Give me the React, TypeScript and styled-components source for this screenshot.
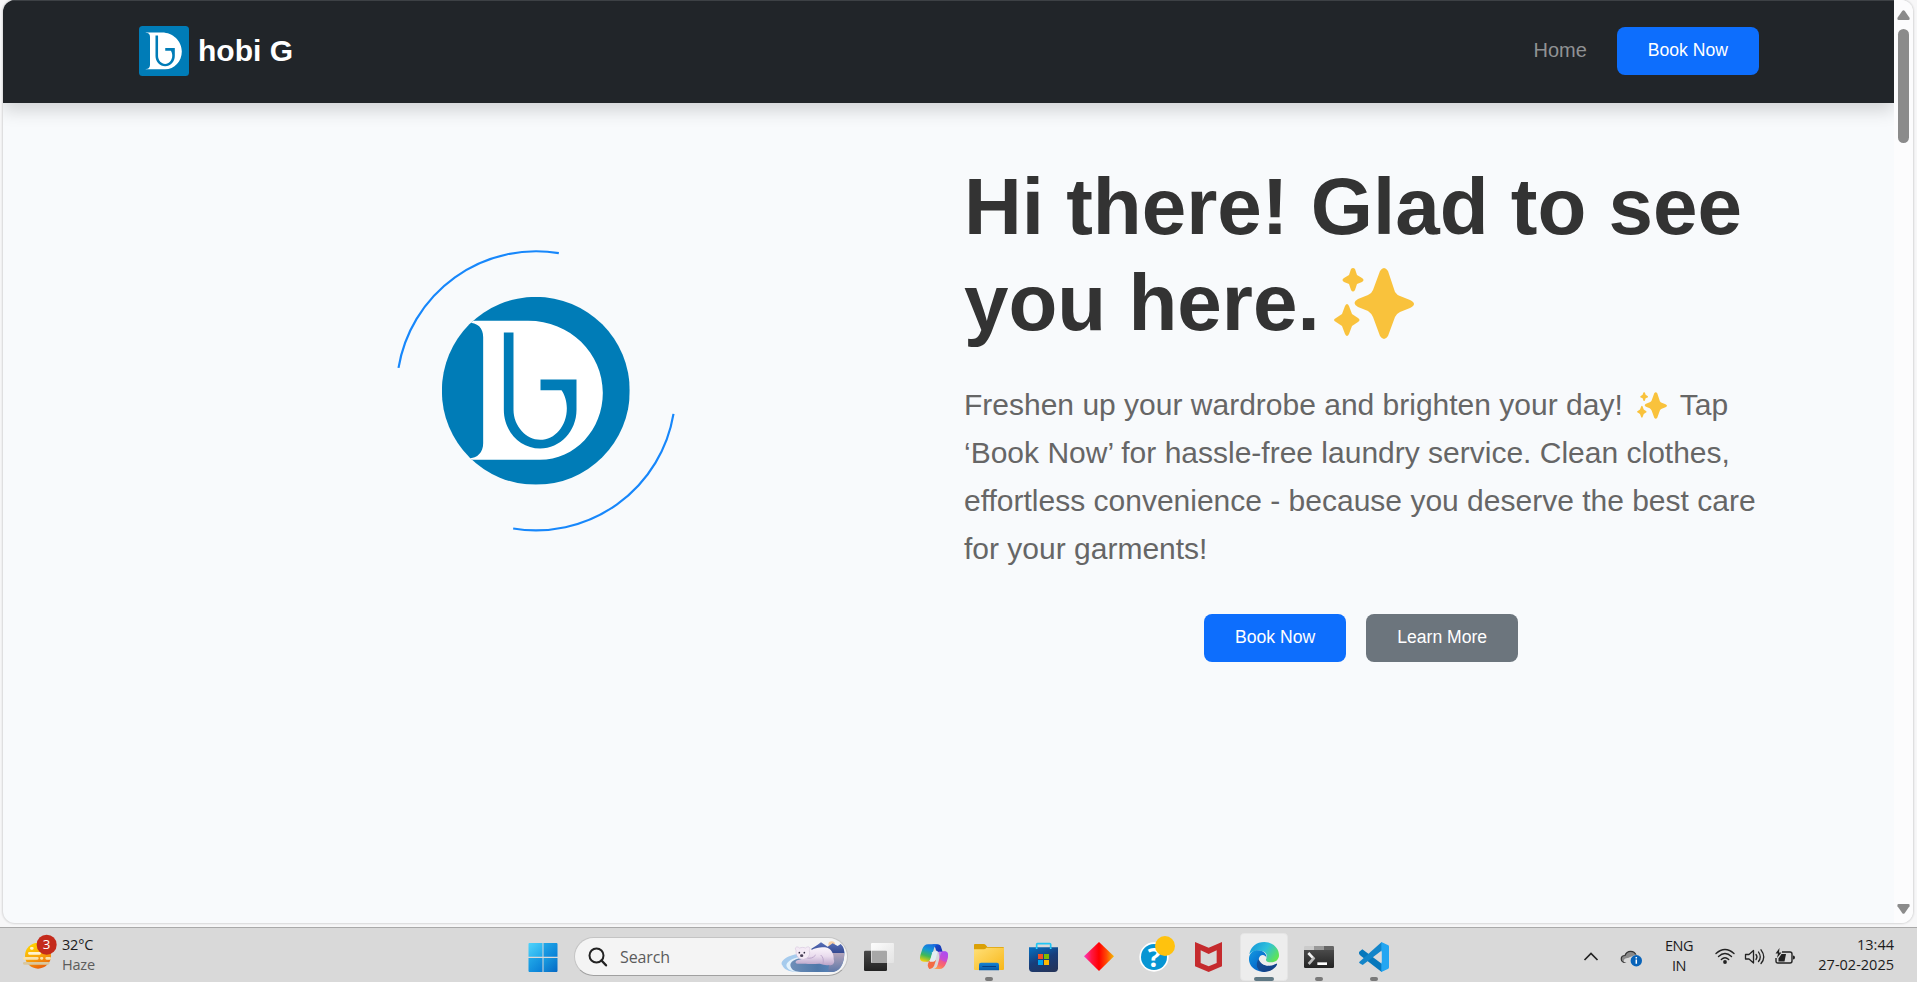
import React from "react";
import styled, { createGlobalStyle } from "styled-components";

const GlobalStyle = createGlobalStyle`
  * { box-sizing: border-box; }
  body { margin: 0; overflow: hidden; font-family: "Liberation Sans", Arial, sans-serif; }
`;

const Desktop = styled.div`
  height: 982px;
  width: 1917px;
  display: flex;
  flex-direction: column;
  overflow: hidden;
  background: #f7f7f8;
`;

const BrowserFrame = styled.div`
  display: flex;
  flex: none;
  width: 1910px;
  height: 923px;
  margin: 0 0 4px 3px;
  border-radius: 12px;
  overflow: hidden;
  background: #f8fafc;
  box-shadow: 0 0 2px 1px rgba(0, 0, 0, 0.13);
`;

const Page = styled.div`
  flex: 1;
  overflow: hidden;
`;

const Navbar = styled.nav`
  height: 103px;
  padding: 0 135px 2px 136px;
  display: flex;
  align-items: center;
  justify-content: space-between;
  background: #212529;
  border-top: 1px solid #3d4145;
  box-shadow: 0 8px 16px rgba(0, 0, 0, 0.15);
`;

const Brand = styled.div`
  display: flex;
  align-items: center;
  gap: 9px;
  color: #fff;
  font-size: 30px;
  font-weight: 700;
  line-height: 50px;
`;

const NavLinks = styled.div`
  display: flex;
  align-items: center;
  gap: 30px;
  padding-bottom: 1px;
`;

const NavLink = styled.span`
  color: #909294;
  font-size: 20px;
`;

const Button = styled.button<{ $tone?: "primary" | "secondary" }>`
  height: 48px;
  padding: 0 31px 1px;
  border: 0;
  border-radius: 8px;
  color: #fff;
  font-family: inherit;
  font-size: 17.6px;
  white-space: nowrap;
  background: ${(p) => (p.$tone === "secondary" ? "#6c757d" : "#0d6efd")};
`;

const Hero = styled.section`
  display: flex;
  padding: 56px 130px 0 136px;
`;

const EmblemColumn = styled.div`
  width: 794px;
  display: flex;
  justify-content: center;
  padding-top: 91px;
`;

const CopyColumn = styled.div`
  width: 796px;
  padding-left: 31px;
  flex: 1;
`;

const Title = styled.h1`
  margin: 0 0 30px;
  color: #333;
  font-size: 80px;
  line-height: 96px;
  font-weight: 700;
  white-space: nowrap;
`;

const Lead = styled.p`
  margin: 0 0 41px;
  color: #666;
  font-size: 30px;
  line-height: 48px;
  white-space: nowrap;
`;

const Actions = styled.div`
  display: flex;
  gap: 20px;
  padding-left: 240px;
`;

const SparkleSvg = styled.svg<{ $size: "large" | "small" }>`
  width: ${(p) => (p.$size === "large" ? 80 : 30)}px;
  height: ${(p) => (p.$size === "large" ? 71 : 27)}px;
  margin: ${(p) => (p.$size === "large" ? "0 0 0 14px" : "0 5px 0 6px")};
  vertical-align: ${(p) => (p.$size === "large" ? -9 : -4)}px;
`;

const Scrollbar = styled.div`
  width: 19px;
  padding: 10px 3px 9px;
  display: flex;
  flex-direction: column;
  background: #fcfcfd;
`;

const Thumb = styled.div`
  width: 11px;
  height: 114px;
  margin: 9px auto auto 1px;
  border-radius: 6px;
  background: #8b8b8b;
`;

const Taskbar = styled.footer`
  height: 55px;
  flex: none;
  display: flex;
  align-items: flex-start;
  padding-top: 5px;
  border-top: 1px solid #a9a9a9;
  background: #d9d9d9;
  color: #1c1c1c;
  font-family: "Open Sans", "Noto Sans", sans-serif;
  font-size: 14.5px;
`;

const Weather = styled.div`
  width: 515px;
  padding-left: 22px;
  display: flex;
  gap: 4px;
`;

const TwoLines = styled.div<{ $align?: string; $spacing?: number }>`
  display: flex;
  flex-direction: column;
  padding-top: 2px;
  line-height: 20px;
  text-align: ${(p) => p.$align ?? "left"};
  letter-spacing: ${(p) => p.$spacing ?? 0}px;
  white-space: nowrap;
`;

const Muted = styled.span`
  color: #5c5c5c;
`;

const Slot = styled.div`
  width: 55px;
  height: 48px;
  display: flex;
  justify-content: center;
`;

const SearchBox = styled.div`
  width: 274px;
  height: 39px;
  margin: 4px 3.5px 0 4px;
  padding: 0 2px 0 13px;
  display: flex;
  align-items: center;
  border-radius: 20px;
  border: 1px solid #c4c4c4;
  border-bottom-color: #a0a0a0;
  background: #f4f4f4;
  color: #5b5b5b;
  font-size: 16px;
`;

const SearchLabel = styled.span`
  margin: 0 auto 0 12px;
  letter-spacing: -0.1px;
`;

const Tray = styled.div`
  margin-left: auto;
  margin-right: 23px;
  display: flex;
`;

const TrayIcon = styled.svg<{ $before: number }>`
  width: 24px;
  height: 24px;
  margin: 12px 0 0 ${(p) => p.$before}px;
  overflow: visible;
`;

const Language = styled.div`
  width: 44px;
  margin: 1px 14px 0 14px;
`;

const Clock = styled.div`
  width: 97px;
  margin-left: auto;
`;

function LogoMark({ size, round }: { size: number; round?: boolean }) {
  return (
    <svg width={size} height={size} viewBox="186 201 564 564">
      <defs>
        <clipPath id={round ? "disc" : "tile"}>
          <rect x="186" y="201" width="564" height="564" rx={round ? 282 : 40} />
        </clipPath>
      </defs>
      <g clipPath={`url(#${round ? "disc" : "tile"})`}>
        <rect x="186" y="201" width="564" height="564" fill="#007cb7" />
        <path
          fill="#fff"
          d="M262 273H445C570 273 669 370 669 489C669 600 586 690 480 690H262V685C292 687 310 668 310 640V322C310 294 294 278 262 278Z"
        />
        <path
          fill="#007cb7"
          d="M372 308H401V540C401 590 440 630 481 630C525 630 561 588 561 535C561 515 555 495 545 481H482V449H590V540C590 605 541 656 481 656C421 656 372 605 372 540Z"
        />
      </g>
    </svg>
  );
}

function Emblem() {
  return (
    <svg width="282" height="282" viewBox="45.5 60.5 846 846">
      <g fill="none" stroke="#1787fb" strokeWidth="6.500">
        <path d="M56 414A418.500 418.500 0 0 1 537 70" />
        <path d="M881 552A418.500 418.500 0 0 1 400 896" />
      </g>
      <svg x="186" y="201" width="564" height="564">
        <LogoMark size={564} round />
      </svg>
    </svg>
  );
}

function Sparkles({ size }: { size: "large" | "small" }) {
  return (
    <SparkleSvg $size={size} viewBox="0 0 80 71">
      <g fill="#f9c23c">
        <path d="M46 3Q50-3 54 3L61 24Q63 27 66 28L76 32Q84 36 76 40L66 44Q62 46 61 49L54 68Q50 74 46 68L39 49Q37 45 34 43L24 39Q17 35 24 31L34 27Q38 25 39 22Z" />
        <path d="M17 1Q19-1 21 1L23 7L28 10Q31 12 28 14L23 16L21 22Q19 25 17 22L15 16L10 14Q7 12 10 10L15 7Z" />
        <path d="M11 38Q13 34 15 38L18 46L24 50Q27 52 24 54L18 58L15 66Q13 70 11 66L8 58L2 54Q-2 52 2 50L8 46Z" />
      </g>
    </SparkleSvg>
  );
}

function TaskIcon({ x, children }: { x: number; children: React.ReactNode }) {
  return (
    <Slot>
      <svg width="48" height="48" viewBox={`${x - 72} 39 144 144`}>
        {children}
      </svg>
    </Slot>
  );
}

function Gradient({ id, stops, d = "0 0 1 1" }: { id: string; stops: string[]; d?: string }) {
  const [x1, y1, x2, y2] = d.split(" ");
  return (
    <linearGradient id={id} x1={x1} y1={y1} x2={x2} y2={y2}>
      {stops.map((s, i) => (
        <stop key={i} offset={i / (stops.length - 1)} stopColor={s} />
      ))}
    </linearGradient>
  );
}

const Bear = () => (
  <svg width="64" height="34" viewBox="844 66 192 102">
    <defs>
      <Gradient id="water" stops={["#6f8fb8", "#4f78a9", "#5d8cc4"]} d="0 0 1 0" />
      <Gradient id="sky" stops={["#5970b9", "#33488f"]} d="0 0 0 1" />
      <Gradient id="shore" stops={["#b5a5bb", "#5f78a8"]} d="0 0 0 1" />
      <Gradient id="fur" stops={["#fbf5fb", "#eadcee", "#b9a3c8"]} d="0 0 0 1" />
    </defs>
    <path d="M896 108C860 112 838 132 848 142C852 153 865 161 890 162H1000C1028 158 1034 130 1034 100Z" fill="#a6cbed" />
    <path d="M897 117C869 124 855 137 862 148C866 156 875 159 890 162H950L960 120Z" fill="#e3f2fc" />
    <path d="M912 118C875 125 867 137 875 150C880 159 892 162 910 162H1000C1025 156 1034 130 1034 103Z" fill="url(#water)" />
    <circle cx="996" cy="80" r="10" fill="#f7cfa5" />
    <path d="M935 92L954 80L964 73L984 86L999 76L1014 84L1023 78C1033 87 1034 98 1034 106H938Z" fill="url(#sky)" />
    <path d="M990 105H1034C1034 135 1022 158 1003 161H986Z" fill="url(#shore)" />
    <path d="M918 106Q948 84 976 88C996 90 1003 109 1002 124C1007 134 999 145 988 141C977 143 970 139 960 137C945 137 933 139 918 137H892C884 135 888 127 896 126L916 121Z" fill="url(#fur)" />
    <path d="M920 119Q936 125 948 111M970 137Q974 120 963 111" fill="none" stroke="#bda7cc" strokeWidth="3" />
    <path d="M889 97C883 88 893 83 899 90Q910 86 918 90C925 82 935 89 929 97Q933 112 922 120Q911 127 900 122Q888 116 889 97Z" fill="#f4eaf5" stroke="#cdbbd6" strokeWidth="1.500" />
    <circle cx="899" cy="104" r="2.500" fill="#302c40" />
    <circle cx="914" cy="104" r="2.500" fill="#302c40" />
    <ellipse cx="906" cy="113" rx="5" ry="4" fill="#4a4058" />
  </svg>
);

export default function App() {
  return (
    <Desktop>
      <GlobalStyle />
      <BrowserFrame>
        <Page>
          <Navbar>
            <Brand>
              <LogoMark size={50} />
              <span>hobi G</span>
            </Brand>
            <NavLinks>
              <NavLink>Home</NavLink>
              <Button>Book Now</Button>
            </NavLinks>
          </Navbar>
          <Hero>
            <EmblemColumn>
              <Emblem />
            </EmblemColumn>
            <CopyColumn>
              <Title>
                Hi there! Glad to see
                <br />
                you here.
                <Sparkles size="large" />
              </Title>
              <Lead>
                Freshen up your wardrobe and brighten your day! <Sparkles size="small" /> Tap
                <br />
                ‘Book Now’ for hassle-free laundry service. Clean clothes,
                <br />
                effortless convenience - because you deserve the best care
                <br />
                for your garments!
              </Lead>
              <Actions>
                <Button>Book Now</Button>
                <Button $tone="secondary">Learn More</Button>
              </Actions>
            </CopyColumn>
          </Hero>
        </Page>
        <Scrollbar>
          <svg width="13" height="10" viewBox="0 0 13 10">
            <path d="M5.200 1Q6.500-.7 7.800 1L12.500 7.800Q13 10 11.500 10H1.500Q0 10 .5 7.800Z" fill="#8b8b8b" />
          </svg>
          <Thumb />
          <svg width="13" height="10" viewBox="0 0 13 10">
            <path d="M5.200 9Q6.500 10.700 7.800 9L12.500 2.200Q13 0 11.500 0H1.500Q0 0 .5 2.200Z" fill="#8b8b8b" />
          </svg>
        </Scrollbar>
      </BrowserFrame>
      <Taskbar>
        <Weather>
          <svg width="36" height="40" viewBox="66 99 108 120">
            <defs>
              <Gradient id="sun" stops={["#ffd400", "#f9a70b", "#e85a0c"]} d="0.3 0 0.7 1" />
            </defs>
            <circle cx="114" cy="167" r="39" fill="url(#sun)" />
            <g strokeLinecap="round" strokeWidth="8" fill="none">
              <path d="M94 145H97M88 160H119" stroke="#fff3cf" />
              <path d="M73 175H112M124 175H126M140 175H149" stroke="#f8e2ae" />
              <path d="M73 190H144" stroke="#d9c79f" />
            </g>
            <circle cx="140" cy="134" r="30" fill="#c42b1c" />
            <text x="140" y="148" fontSize="40" textAnchor="middle" fill="#fff">3</text>
          </svg>
          <TwoLines $spacing={-0.2}>
            <span>32°C</span>
            <Muted>Haze</Muted>
          </TwoLines>
        </Weather>
        <TaskIcon x={127.5}>
          <defs>
            <Gradient id="win1" stops={["#4fd3fb", "#20a7ea"]} />
            <Gradient id="win2" stops={["#22a9e8", "#087ed6"]} />
            <Gradient id="win3" stops={["#1a9fe2", "#0568c4"]} />
          </defs>
          <path d="M86 69H126V110H84V71Z" fill="url(#win1)" />
          <path d="M129 69H169L171 71V110H129Z" fill="url(#win2)" />
          <path d="M84 114H126V156H86L84 154Z" fill="url(#win2)" />
          <path d="M129 114H171V154L169 156H129Z" fill="url(#win3)" />
        </TaskIcon>
        <SearchBox>
          <svg width="20" height="20" viewBox="0 0 20 20" fill="none" stroke="#222" strokeWidth="2">
            <circle cx="8.500" cy="8.500" r="7" />
            <path d="M13.500 13.500L18 18.300" strokeWidth="2.400" strokeLinecap="round" />
          </svg>
          <SearchLabel>Search</SearchLabel>
          <Bear />
        </SearchBox>
        <TaskIcon x={87}>
          <defs>
            <Gradient id="dark" stops={["#4a4a4a", "#222"]} d="0 0 0 1" />
            <Gradient id="pane" stops={["#fff", "#e4e4e4"]} d="0 0 1 1" />
          </defs>
          <rect x="42" y="92" width="69" height="61" rx="4" fill="url(#dark)" />
          <rect x="63" y="69" width="69" height="60" rx="3" fill="url(#pane)" opacity=".93" />
          <path d="M65 92H108Q111 92 111 95V129H65Z" fill="#a7a7a7" />
        </TaskIcon>
        <TaskIcon x={252}>
          <defs>
            <Gradient id="cop1" stops={["#176ee0", "#1499d5", "#40b957", "#f4d10a"]} d="0.6 0 0.25 1" />
            <Gradient id="cop2" stops={["#a34cf0", "#e64ca0", "#fa6b68", "#fbb448"]} d="0.7 0 0.2 1" />
            <Gradient id="cop3" stops={["#1652d2", "#1631ac"]} />
          </defs>
          <path d="M247 73H262Q271 73 274 83L278 96H265Q258 94 256 83Z" fill="url(#cop3)" />
          <path d="M238 147H248Q259 147 263 134L271 105Q274 94 283 94Q296 94 294 110Q292 122 287 133Q281 147 269 147Z" fill="url(#cop2)" />
          <path d="M265 94H280Q296 94 294 108L290 124Q284 128 269 117Z" fill="#b44bef" opacity=".65" />
          <path d="M228 125Q239 127 244 111L251 89Q254 74 267 73H234Q222 73 217 87L211 106Q206 125 222 125Z" fill="url(#cop1)" />
          <path d="M227 125H237Q229 136 238 147Q247 148 252 138L258 120Z" fill="#f46b43" />
          <path d="M247 97Q249 94 253 94H263L256 121Q254 125 250 125H239Z" fill="#e2eef3" />
        </TaskIcon>
        <TaskIcon x={417}>
          <defs>
            <Gradient id="folder" stops={["#ffe078", "#f8b719"]} />
            <Gradient id="tray" stops={["#1683d5", "#0759a6"]} d="0 0 0 1" />
          </defs>
          <path d="M372 74Q372 72 375 72H401Q405 72 408 76L412 81H459Q462 81 462 85V100H372Z" fill="#daa006" />
          <path d="M372 88H401Q406 88 409 83H462V147Q462 150 459 150H375Q372 150 372 147Z" fill="url(#folder)" />
          <path d="M387 151V134Q387 128 393 128H441Q447 128 447 134V151Z" fill="url(#tray)" />
          <path d="M397 139.500H438" stroke="#073e82" strokeWidth="3" />
          <rect x="405" y="171" width="24" height="12" rx="6" fill="#797979" />
        </TaskIcon>
        <TaskIcon x={582}>
          <defs>
            <Gradient id="bag" stops={["#066bbb", "#183d7a", "#24355c"]} d="0.2 0 0.7 1" />
          </defs>
          <path d="M560 90V73Q560 71 562 71H599Q602 71 602 73V90" fill="none" stroke="#20c6f4" strokeWidth="5" />
          <path d="M537 82H624V145Q624 156 613 156H548Q537 156 537 145Z" fill="url(#bag)" />
          <path d="M560 82V87M602 82V87" stroke="#31d5ff" strokeWidth="5" />
          <path d="M564 102H579V117H564Z" fill="#f25022" />
          <path d="M582 102H597V117H582Z" fill="#7fba00" />
          <path d="M564 120H579V135H564Z" fill="#00a4ef" />
          <path d="M582 120H597V135H582Z" fill="#ffb900" />
        </TaskIcon>
        <TaskIcon x={747}>
          <defs>
            <Gradient id="gem" stops={["#ff36c0", "#ff1744", "#ff0000", "#ff4b05", "#f5bd00"]} d="0 0 1 0" />
          </defs>
          <path d="M747 66L792 109L747 153L702 109Z" fill="url(#gem)" />
        </TaskIcon>
        <TaskIcon x={72}>
          <circle cx="72" cy="111" r="44" fill="#fff" />
          <circle cx="72" cy="111" r="39" fill="#0795d3" />
          <text x="73" y="140" fontSize="82" fontWeight="700" textAnchor="middle" fill="#fff">?</text>
          <circle cx="105" cy="78" r="30" fill="#ffc20e" />
        </TaskIcon>
        <TaskIcon x={237}>
          <path fillRule="evenodd" d="M195 66L236 83L276 66V139L236 156L195 139ZM212 91V129L236 139L260 129V91L236 102Z" fill="#c52b2e" />
        </TaskIcon>
        <TaskIcon x={402}>
          <defs>
            <Gradient id="edgeTop" stops={["#1597d8", "#2fc0dc", "#62e64d"]} d="0 0.2 1 0.7" />
            <Gradient id="edgeLeft" stops={["#159be2", "#0872cf", "#0b57b5"]} />
            <Gradient id="edgeBase" stops={["#16539c", "#103c82"]} />
          </defs>
          <rect x="331" y="40" width="142" height="142" rx="12" fill="#ededed" stroke="#e2e2e2" strokeWidth="2" />
          <path d="M358 103C362 79 380 66 403 66C429 66 447 86 447 105C447 119 437 127 423 127C412 127 405 123 409 115C413 107 409 97 398 94C383 88 365 92 358 103Z" fill="url(#edgeTop)" />
          <path d="M357 114C359 93 379 86 395 93C405 97 411 106 409 113C405 101 388 102 386 118C383 139 401 150 420 145C409 157 394 158 380 151C364 143 356 130 357 114Z" fill="url(#edgeLeft)" />
          <path d="M386 117C390 130 403 138 420 137C427 136 434 133 439 131Q442 130 441 134C434 147 418 157 401 156C380 154 375 132 386 117Z" fill="url(#edgeBase)" />
          <path d="M392 113C388 123 397 136 416 137Q407 134 404 127L409 115Q404 100 392 113Z" fill="#ededed" />
          <rect x="372" y="171" width="60" height="12" rx="6" fill="#5f7884" />
        </TaskIcon>
        <TaskIcon x={567}>
          <path d="M522 90V82Q522 78 526 78H552V90Z" fill="#cbcbcb" />
          <path d="M552 78H582V90H552Z" fill="#999" />
          <path d="M582 78H608Q612 78 612 82V90H582Z" fill="#666" />
          <path d="M522 90H612V140Q612 144 608 144H526Q522 144 522 140Z" fill="url(#dark)" />
          <path d="M535 99L551 116" stroke="#f4f4f4" strokeWidth="8" />
          <path d="M553 113L536 132" stroke="#bdbdbd" strokeWidth="8" />
          <path d="M562 127H591V135H562Z" fill="#fff" />
          <rect x="555" y="171" width="24" height="12" rx="6" fill="#797979" />
        </TaskIcon>
        <TaskIcon x={732}>
          <path d="M687 96L697 88L763 137L755 156L692 107Q685 102 687 96Z" fill="#0778bc" />
          <path d="M687 127L755 66L760 88L698 135L689 130Z" fill="#1385c9" />
          <path d="M754 66L775 76Q777 77 777 80V142Q777 145 775 146L754 156Z" fill="#23a6f2" />
          <path d="M755 94V128L732 111Z" fill="#dcdcdc" />
          <rect x="720" y="171" width="24" height="12" rx="6" fill="#797979" />
        </TaskIcon>
        <Tray>
          <TrayIcon $before={0} viewBox="0 0 24 24">
            <path d="M5.500 15L12 8.500L18.500 15" fill="none" stroke="#222" strokeWidth="1.700" />
          </TrayIcon>
          <TrayIcon $before={16} viewBox="0 0 24 24">
            <path d="M6 17.500C1 17.500 1 10.500 6 10.500C8 5 15 5 17 10L9 15Z" fill="#8a8a8a" stroke="#333" strokeWidth="1.200" />
            <path d="M6 17.500C3 16 6 12.500 9 13L17 9.500Q20 10 20 13V17.500Z" fill="#d9d9d9" />
            <circle cx="17.300" cy="15.800" r="5.700" fill="#0863b9" />
            <path d="M17.300 14.500V18.700M17.300 12V13.500" stroke="#fff" strokeWidth="1.500" />
          </TrayIcon>
          <Language>
            <TwoLines $align="center" $spacing={-0.5}>
              <span>ENG</span>
              <span>IN</span>
            </TwoLines>
          </Language>
          <TrayIcon $before={-2} viewBox="0 0 24 24">
            <g fill="none" stroke="#222" strokeWidth="1.400" strokeLinecap="round">
              <path d="M3 8.500Q12 .5 21 8.500M5.500 11.500Q12 5.500 18.500 11.500M8.300 14.500Q12 11 15.700 14.500" />
            </g>
            <circle cx="12" cy="17" r="1.900" fill="#222" />
          </TrayIcon>
          <TrayIcon $before={6} viewBox="0 0 24 24">
            <g fill="none" stroke="#222" strokeWidth="1.300" strokeLinecap="round" strokeLinejoin="round">
              <path d="M2.500 9.500H6L10.500 5.500V18L6 14H2.500ZM13 9.500Q15 12 13 14.500M15.500 7Q19 12 15.500 16.500M18 4.800Q23.500 12 18 18.500" />
            </g>
          </TrayIcon>
          <TrayIcon $before={6} viewBox="0 0 24 24">
            <path d="M9 7H17Q19 7 19 9V16Q19 18 17 18H5Q3 18 3 16V13" fill="none" stroke="#222" strokeWidth="1.400" />
            <path d="M20 10.500Q22 10.500 22 12.500Q22 14.500 20 14.500Z" fill="#222" />
            <path d="M8.500 9H13L11.500 16.500H5.500V13.500Z" fill="#222" />
            <path d="M6.500 3L2.500 8.500H5L4 13L8.500 7.500H6Z" fill="#222" />
          </TrayIcon>
          <Clock>
            <TwoLines $align="right">
              <span>13:44</span>
              <span>27-02-2025</span>
            </TwoLines>
          </Clock>
        </Tray>
      </Taskbar>
    </Desktop>
  );
}
